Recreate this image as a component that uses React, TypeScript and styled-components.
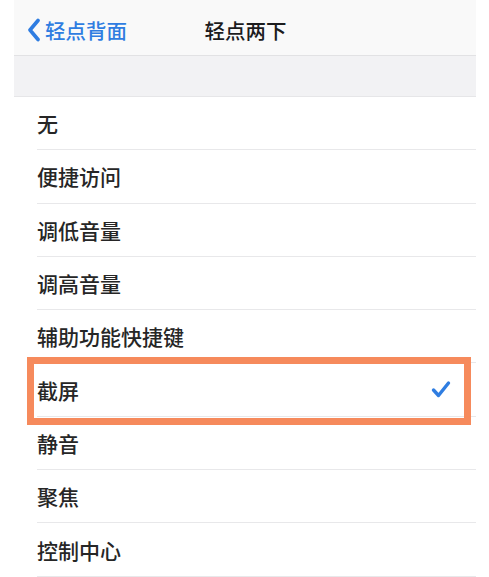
import React from "react";
import styled, { createGlobalStyle } from "styled-components";

const Global = createGlobalStyle`
  html, body { margin: 0; padding: 0; background: #ffffff; }
  body { font-family: "Noto Sans CJK SC", "Noto Sans", sans-serif; }
`;

const Screen = styled.div`
  width: 462px;
  margin-left: 14px;
  background: #ffffff;
`;

const NavBar = styled.div`
  height: 56px;
  background: #f9f9f9;
  border-bottom: 1px solid #e2e2e4;
  display: grid;
  grid-template-columns: 1fr auto 1fr;
  align-items: center;
  box-sizing: border-box;
  padding: 0 12px 0 13px;
`;

const Back = styled.div`
  display: flex;
  align-items: center;
  gap: 4px;
  color: #2f7de1;
  font-size: 20.5px;
  font-weight: 500;
  margin-top: 4px;
`;

const Title = styled.div`
  color: #1c1c1e;
  font-size: 20.5px;
  font-weight: 500;
  margin-top: 4px;
`;

const Band = styled.div`
  height: 40px;
  background: #f2f2f4;
  border-bottom: 1px solid #e6e6e8;
`;

const List = styled.div`
  display: flex;
  flex-direction: column;
  padding-left: 23px;
`;

const Row = styled.div`
  position: relative;
  height: 53.3px;
  box-sizing: border-box;
  border-bottom: 1px solid #e8e8ea;
  display: flex;
  align-items: center;
  justify-content: space-between;
  padding-right: 25px;
  color: #262626;
  font-size: 21px;
  font-weight: 500;
`;

const Highlight = styled.div`
  position: absolute;
  left: -10px;
  right: 5px;
  top: -6px;
  bottom: -9px;
  border: 7px solid #f68a5c;
  pointer-events: none;
`;

const items = ["无", "便捷访问", "调低音量", "调高音量", "辅助功能快捷键", "截屏", "静音", "聚焦", "控制中心"];

export default function App() {
  return (
    <>
      <Global />
      <Screen>
        <NavBar>
          <Back>
            <svg width="14" height="24" viewBox="0 0 14 24">
              <path d="M11 2.5 L3 12 L11 21.5" fill="none" stroke="#2f7de1" strokeWidth="3.6" strokeLinecap="round" strokeLinejoin="round" />
            </svg>
            <span>轻点背面</span>
          </Back>
          <Title>轻点两下</Title>
          <div />
        </NavBar>
        <Band />
        <List>
          {items.map((t) => (
            <Row key={t}>
              <span>{t}</span>
              {t === "截屏" && (
                <>
                  <svg width="20" height="19" viewBox="0 0 20 19">
                    <path d="M2.5 10 L7.5 15.5 L17.5 3" fill="none" stroke="#2f7de1" strokeWidth="3.4" strokeLinecap="round" strokeLinejoin="round" />
                  </svg>
                  <Highlight />
                </>
              )}
            </Row>
          ))}
        </List>
      </Screen>
    </>
  );
}
